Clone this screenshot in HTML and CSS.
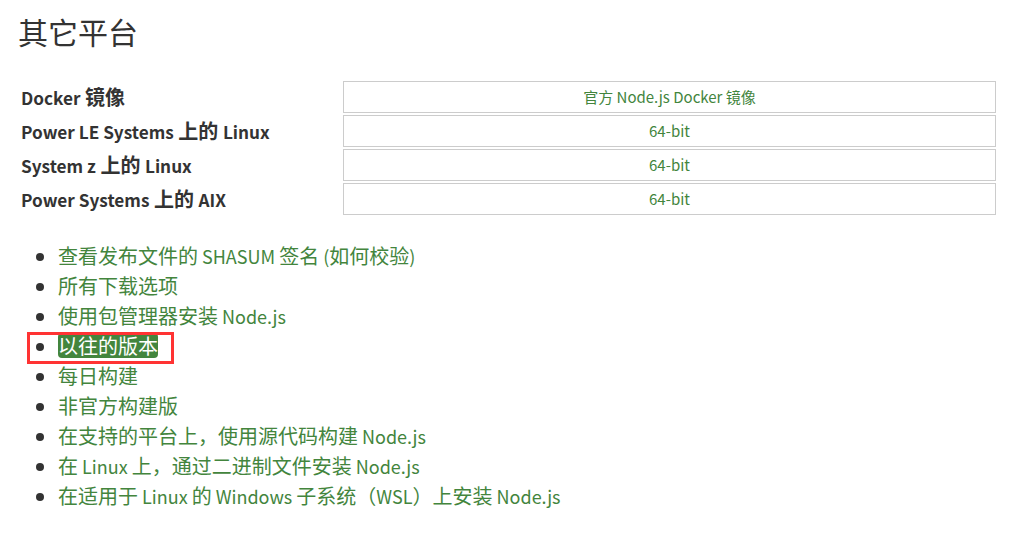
FILE: index.html
```html
<!DOCTYPE html>
<html lang="zh">
<head>
  <meta charset="UTF-8">
  <meta name="viewport" content="width=device-width, initial-scale=1.0">
  <title>其它平台</title>
  <link rel="stylesheet" href="styles.css">
</head>
<body>
  <div class="page">
    <h1>其它平台</h1>
    <table class="platforms">
      <tr>
        <th><span class="en">Docker</span> 镜像</th>
        <td><a href="#">官方 Node.js Docker 镜像</a></td>
      </tr>
      <tr>
        <th><span class="en">Power LE Systems</span> 上的 <span class="en">Linux</span></th>
        <td><a href="#">64-bit</a></td>
      </tr>
      <tr>
        <th><span class="en">System z</span> 上的 <span class="en">Linux</span></th>
        <td><a href="#">64-bit</a></td>
      </tr>
      <tr>
        <th><span class="en">Power Systems</span> 上的 <span class="en">AIX</span></th>
        <td><a href="#">64-bit</a></td>
      </tr>
    </table>

    <ul class="links">
      <li><a href="#">查看发布文件的<span class="en"> SHASUM </span>签名</a><span class="en"> </span><a href="#"><span class="en">(</span>如何校验<span class="en">)</span></a></li>
      <li><a href="#">所有下载选项</a></li>
      <li><a href="#">使用包管理器安装<span class="en"> Node.js</span></a></li>
      <!-- 標註框 -->
      <li><a href="#" class="active">以往的版本</a><span class="mark-box"></span></li>
      <li><a href="#">每日构建</a></li>
      <li><a href="#">非官方构建版</a></li>
      <li><a href="#">在支持的平台上，使用源代码构建<span class="en"> Node.js</span></a></li>
      <li><a href="#">在<span class="en"> Linux </span>上，通过二进制文件安装<span class="en"> Node.js</span></a></li>
      <li><a href="#">在适用于<span class="en"> Linux </span>的<span class="en"> Windows </span>子系统（<span class="en">WSL</span>）上安装<span class="en"> Node.js</span></a></li>
    </ul>
  </div>
</body>
</html>
```

FILE: styles.css
```css
body {
  font-family: "Noto Sans CJK SC", sans-serif;
  color: #333;
  background-color: #fff;
  margin: 0;
  padding: 0;
}
a {
  color: #43853d;
  text-decoration: none;
}
.en {
  font-size: 0.9em;
}
.page {
  width: 984px;
  padding: 13px 0 0 18px;
}
.page h1 {
  font-size: 30px;
  font-weight: 400;
  line-height: 36px;
  margin: 0 0 30px;
}
.platforms {
  width: 980px;
  border-spacing: 2px;
  margin: 0 0 24px;
}
.platforms th {
  width: 320px;
  padding: 0 0 0 1px;
  text-align: left;
  font-size: 20px;
  font-weight: 600;
  line-height: 20px;
}
.platforms th .en {
  font-size: 0.86em;
}
.platforms td {
  height: 20px;
  border: 1px solid #ccc;
  padding: 5px;
  text-align: center;
  font-size: 15px;
  line-height: 20px;
}
.links {
  margin: 0;
  padding-left: 40px;
  font-size: 20px;
  line-height: 30px;
}
.links li {
  position: relative;
}
.links .active {
  display: inline-block;
  line-height: 25px;
  background-color: #43853d;
  color: #fff;
  border-radius: 4px;
}
.mark-box {
  position: absolute;
  left: -31px;
  top: 1px;
  width: 141px;
  height: 26px;
  border: 3px solid #f33;
}
```
